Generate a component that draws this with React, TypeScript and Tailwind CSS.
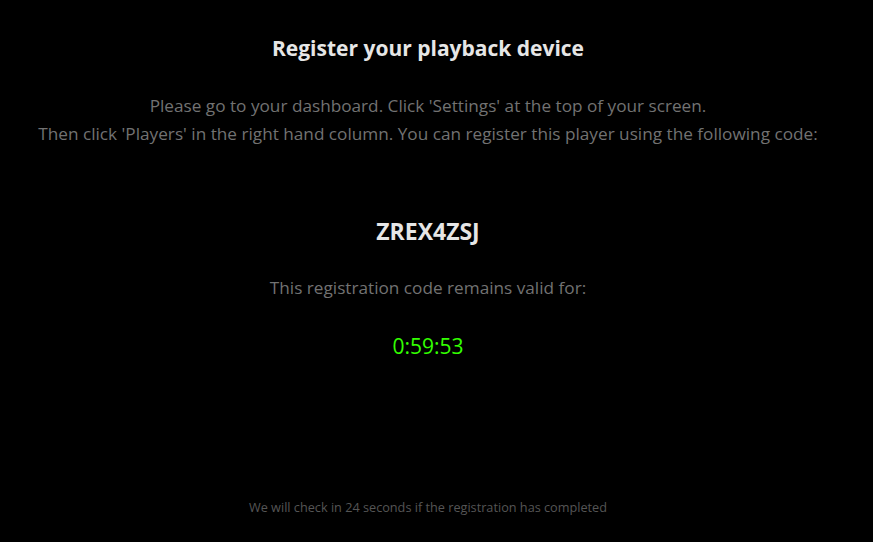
export default function App() {
  return (
    <div className="w-full h-[542px] bg-black pr-[17px] flex flex-col items-center text-center font-['Open_Sans','Liberation_Sans',sans-serif]">
      <h1 className="mt-[35px] h-[26px] text-[21px] leading-[26px] font-bold text-[#e6e6e6]">
        Register your playback device
      </h1>
      <div className="mt-[31px] text-[17.2px] leading-[28px] text-[#727272]">
        <p>Please go to your dashboard. Click 'Settings' at the top of your screen.</p>
        <p>Then click 'Players' in the right hand column. You can register this player using the following code:</p>
      </div>
      <div className="mt-[70px] text-[23px] leading-[26px] font-bold text-[#e6e6e6]">ZREX4ZSJ</div>
      <div className="mt-[31px] text-[17.2px] leading-[26px] text-[#727272]">
        This registration code remains valid for:
      </div>
      <div className="mt-[32px] text-[21px] leading-[26px] font-medium text-[#33ff00]">0:59:53</div>
      <div className="mt-auto mb-[27px] text-[12.7px] leading-[16px] text-[#555555]">
        We will check in 24 seconds if the registration has completed
      </div>
    </div>
  )
}
